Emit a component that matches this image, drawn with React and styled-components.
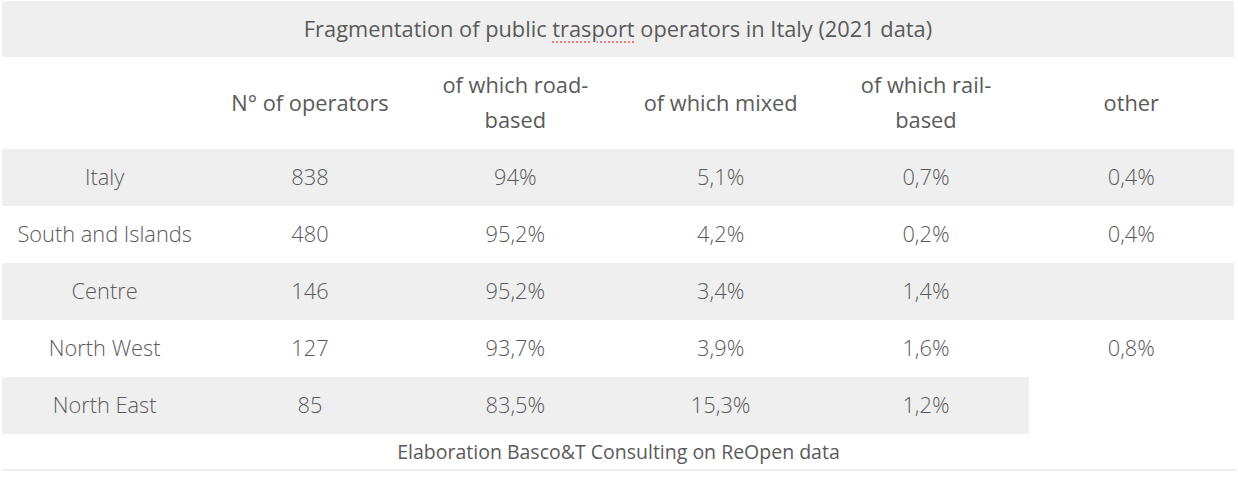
import React from "react";
import styled, { createGlobalStyle } from "styled-components";

const GlobalStyle = createGlobalStyle`
  body {
    margin: 0;
    background: #fff;
    font-family: "Open Sans", "Liberation Sans", sans-serif;
  }
`;

const rows = [
  { area: "Italy", n: "838", road: "94%", mixed: "5,1%", rail: "0,7%", other: "0,4%" },
  { area: "South and Islands", n: "480", road: "95,2%", mixed: "4,2%", rail: "0,2%", other: "0,4%" },
  { area: "Centre", n: "146", road: "95,2%", mixed: "3,4%", rail: "1,4%", other: "" },
  { area: "North West", n: "127", road: "93,7%", mixed: "3,9%", rail: "1,6%", other: "0,8%" },
  { area: "North East", n: "85", road: "83,5%", mixed: "15,3%", rail: "1,2%" },
];

const App = () => {
  return (
    <>
      <GlobalStyle />
      <Figure>
        <Table>
          <colgroup>
            {[0, 1, 2, 3, 4, 5].map((i) => (
              <col key={i} />
            ))}
          </colgroup>
          <thead>
            <Row $shade>
              <TitleCell colSpan={6}>
                Fragmentation of public <Misspelled>trasport</Misspelled> operators in Italy (2021 data)
              </TitleCell>
            </Row>
            <Row>
              <HeadCell></HeadCell>
              <HeadCell>N° of operators</HeadCell>
              <HeadCell>of which road-based</HeadCell>
              <HeadCell>of which mixed</HeadCell>
              <HeadCell>of which rail-based</HeadCell>
              <HeadCell>other</HeadCell>
            </Row>
          </thead>
          <tbody>
            {rows.map((r, i) => (
              <Row key={r.area} $shade={i % 2 === 0}>
                <Cell>{r.area}</Cell>
                <Cell>{r.n}</Cell>
                <Cell>{r.road}</Cell>
                <Cell>{r.mixed}</Cell>
                <Cell>{r.rail}</Cell>
                {r.other !== undefined && <Cell>{r.other}</Cell>}
              </Row>
            ))}
          </tbody>
        </Table>
        <Caption>Elaboration Basco&amp;T Consulting on ReOpen data</Caption>
      </Figure>
    </>
  );
};

export default App;

const Figure = styled.figure`
  margin: 1px 0 0 1px;
  width: 1235px;
  border-bottom: 2px solid #efefef;
`;

const Table = styled.table`
  margin-left: 1px;
  width: 1232px;
  table-layout: fixed;
  border-collapse: collapse;
  color: #5a5a5a;
  font-size: 21.8px;
  line-height: 35px;
`;

const Row = styled.tr`
  background: ${(props) => (props.$shade ? "#efefef" : "transparent")};
`;

const TitleCell = styled.th`
  padding: 10px 8px 11px;
  font-weight: 400;
  text-align: center;
`;

const Misspelled = styled.span`
  text-decoration-line: underline;
  text-decoration-style: dotted;
  text-decoration-color: #f07a7a;
  text-decoration-thickness: 2px;
  text-underline-offset: 4px;
`;

const HeadCell = styled.th`
  padding: 10px 20px 12px;
  font-weight: 400;
  text-align: center;
  vertical-align: middle;
`;

const Cell = styled.td`
  padding: 10px 8px 12px;
  font-weight: 300;
  text-align: center;
  white-space: nowrap;
`;

const Caption = styled.figcaption`
  text-align: center;
  font-size: 19.5px;
  line-height: 35px;
  color: #5a5a5a;
`;
